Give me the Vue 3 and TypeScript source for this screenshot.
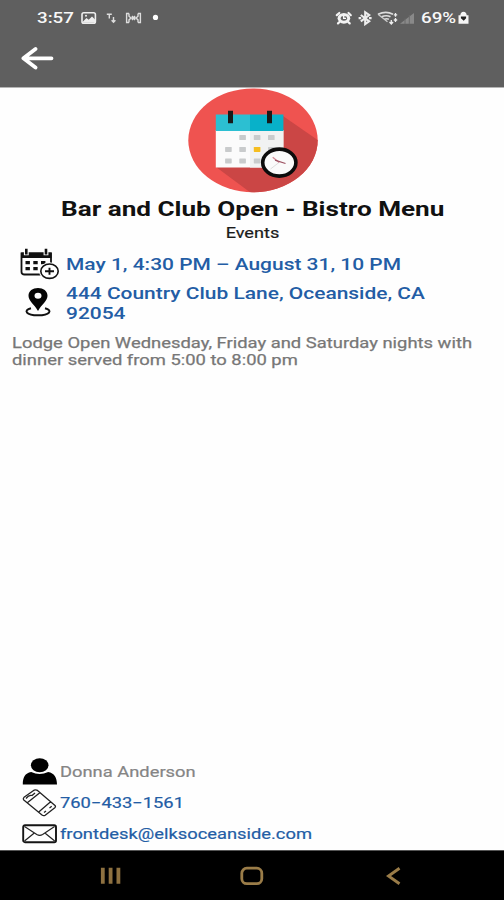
<script setup lang="ts">
interface Dot { x: number; y: number; fill: string }

const grey = '#c9cbcc'
const dots: Dot[] = [
  { x: 54.5, y: 49.5, fill: grey }, { x: 69, y: 49.5, fill: grey }, { x: 83.2, y: 49.5, fill: grey },
  { x: 40.3, y: 61.3, fill: grey }, { x: 54.5, y: 61.3, fill: grey }, { x: 69, y: 61.3, fill: '#f5bd1f' }, { x: 83.2, y: 61.3, fill: grey },
  { x: 40.3, y: 72.8, fill: grey }, { x: 54.5, y: 72.8, fill: grey }, { x: 69, y: 72.8, fill: grey },
]
const address: string[] = ['444 Country Club Lane, Oceanside, CA', '92054']
const description: string[] = [
  'Lodge Open Wednesday, Friday and Saturday nights with',
  'dinner served from 5:00 to 8:00 pm',
]
</script>

<template>
  <div class="screen">
    <header class="top">
      <div class="status">
        <span class="wide clock">3:57</span>
        <svg class="status-left" width="82" height="16" viewBox="0 0 82 16">
          <rect x="1" y="2.8" width="13.4" height="10.4" rx="1.8" fill="none" stroke="#eee" stroke-width="1.6" />
          <path d="M2 11.5L5.5 8l2.2 1.8L11 6.5l3 3v3.2H2z" fill="#eee" /><circle cx="5" cy="5.8" r="1" fill="#eee" />
          <path d="M25.8 4.2h5M28.3 4.2v4.3M32.5 7v5M30.6 10.3l1.9 2 1.9-2" fill="none" stroke="#ddd" stroke-width="1.4" />
          <path d="M48 3.5h-2.4v9H48M48 3.5v2.8l2 1.8-2 1.8v2.6M57 3.5h2.4v9H57M57 3.5v2.8l-2 1.8 2 1.8v2.6M50.5 8h4M51 6l3 4M54 6l-3 4" fill="none" stroke="#ddd" stroke-width="1.4" />
          <circle cx="74.5" cy="7.4" r="2.6" fill="#fff" />
        </svg>
        <svg class="status-right" width="80" height="16" viewBox="0 0 80 16">
          <path d="M1.8 5.2L4.3 3M13.5 3l2.3 2.2M4.5 12l-1.5 1.4M13.2 12l1.5 1.400" stroke="#f3f3f3" stroke-width="2.2" stroke-linecap="round" />
          <ellipse cx="8.900" cy="8.300" rx="6.300" ry="5.400" fill="#f3f3f3" /><ellipse cx="8.900" cy="8.300" rx="3.200" ry="2.400" fill="#666" />
          <path d="M8.700 6v2.400h2.300" fill="none" stroke="#fff" stroke-width="1.300" />
          <path d="M25.800 5l8.400 6.300-4 2.800V2.200l4 2.800-8.400 6.300" fill="none" stroke="#eee" stroke-width="2.100" />
          <path d="M23.600 8.200h2.600M34 8.200h2.600" stroke="#eee" stroke-width="2.200" />
          <path d="M43 4.200q8-3.600 15 0M46.500 6.800q5-2.200 9 0M49.500 9.200q2-1 4.400 0" fill="none" stroke="#ddd" stroke-width="1.600" />
          <path d="M43 4.200l9.500 7.600" stroke="#ccc" stroke-width="1.300" />
          <path d="M60.500 3v3.800M58.800 4.900h3.400M60.500 8v4M58.800 10h3.400M56.300 10v4M54.500 12l1.800 2 1.800-2" fill="none" stroke="#eee" stroke-width="1.300" />
          <path d="M65 13.800L79 3v10.800z" fill="#898989" />
          <path d="M70 8.500v5.500M74.300 5v9" stroke="#6b6b6b" stroke-width="1" />
        </svg>
        <span class="wide battery">69%</span>
        <svg class="lock" width="11" height="14" viewBox="0 0 11 14">
          <path d="M.5 4.200h1.800Q2.600.7 5.500.7t3.200 3.500h1.800v8.600H.5z" fill="#f5f5f5" />
          <path d="M2.900 5.500h5.200v1.800L5.700 9.800 2.900 7.300z" fill="#222" />
        </svg>
      </div>
      <button class="back" aria-label="Back">
        <svg width="34" height="24" viewBox="0 0 34 24">
          <path d="M31.500 12.300H3.500M15.500 3L3.400 12.300l12.100 9.200" fill="none" stroke="#fff" stroke-width="3.800" stroke-linecap="round" stroke-linejoin="round" />
        </svg>
      </button>
    </header>

    <main class="content">
      <svg class="hero" width="130" height="105" viewBox="0 0 130 105">
        <defs><clipPath id="disc"><ellipse cx="65" cy="52.3" rx="64.7" ry="51.9" /></clipPath></defs>
        <g clip-path="url(#disc)">
          <path d="M0 0h130v105H0z" fill="#ef5350" />
          <path d="M95 28l36 25v52H63L28 79z" fill="#cb4645" />
        </g>
        <path d="M27.8 42h67.6v37.5H27.8z" fill="#fbfbfb" />
        <path d="M62 42h33.4v37.5H62z" fill="#f1f2f2" />
        <path d="M27.8 26.500H62V43H27.800z" fill="#2cbfd2" />
        <path d="M62 26.500h33.400V43H62z" fill="#08b1c9" />
        <path d="M40 22.700h5v12.500h-5zM79 22.700h5v12.500h-5z" fill="#191919" />
        <rect v-for="(d, i) in dots" :key="i" :x="d.x - 3.2" :y="d.y - 2.4" width="6.6" height="5" rx=".6" :fill="d.fill" />
        <ellipse cx="91.300" cy="74.600" rx="16.600" ry="13.500" fill="#fafafa" stroke="#0c0c0c" stroke-width="3.600" />
        <path d="M82.500 81l8.500-6.500" stroke="#ddd" stroke-width="1" />
        <path d="M84.700 69.300l6.500 5.300" stroke="#d38a96" stroke-width="1.300" /><path d="M87 72.200l10.500 3.300" stroke="#9d5363" stroke-width="1.300" />
      </svg>

      <h1 class="title"><span class="wide">Bar and Club Open - Bistro Menu</span></h1>
      <p class="category"><span class="wide">Events</span></p>

      <section class="details">
        <a class="row date">
          <svg width="40" height="32" viewBox="0 0 40 32">
            <path d="M21 26.500H4.500Q1.500 26.500 1.500 24V5.500H31V16" fill="none" stroke="#111" stroke-width="1.800" />
            <path d="M1.300 4.500h30.200V10H1.300z" fill="#111" />
            <path d="M6.300 1.300v6M26 1.300v6" stroke="#fff" stroke-width="4.800" /><path d="M6.300.8v5.800M26 .8v5.800" stroke="#111" stroke-width="2.600" />
            <path d="M5.500 13h4.400v3.300H5.500zM13.300 13h4.400v3.300h-4.400zM21 13h4.400v3.300H21zM5.500 19h4.400v3.300H5.500zM13.300 19h4.400v3.300h-4.400z" fill="#111" />
            <ellipse cx="29.500" cy="23.200" rx="10.400" ry="9" fill="#fff" /><ellipse cx="29.500" cy="23.200" rx="8.700" ry="7.200" fill="#fff" stroke="#111" stroke-width="1.600" />
            <path d="M25 23.200h9M29.500 19.700v7" stroke="#111" stroke-width="1.900" />
          </svg>
          <span class="wide">May 1, 4:30 PM – August 31, 10 PM</span>
        </a>
        <a class="row place">
          <svg width="40" height="30" viewBox="0 0 40 30">
            <path d="M11 21.200C3 23.300 6 28.300 18 28.300s15-5 7-7.100" fill="none" stroke="#111" stroke-width="2" />
            <path fill-rule="evenodd" d="M18 24C14 17 8.500 14 8.500 8.800 8.500 4 12.700 1 18 1s9.500 3 9.500 7.800C27.500 14 22 17 18 24zM18 5.700a3.500 3 0 1 0 0 6 3.500 3 0 1 0 0-6z" fill="#050505" />
          </svg>
          <span class="address"><span v-for="line in address" :key="line" class="wide">{{ line }}</span></span>
        </a>
      </section>

      <p class="description"><span v-for="line in description" :key="line" class="wide">{{ line }}</span></p>

      <footer class="contacts">
        <div class="contact person">
          <svg width="36" height="28" viewBox="0 0 36 28">
            <ellipse cx="17.700" cy="7.300" rx="8.800" ry="7" fill="#000" />
            <path d="M.8 26.500c0-7 2.200-11.500 8.400-12.500q8.400 4.200 17 0C32.200 15 35 19.500 35 26.500z" fill="#000" />
          </svg>
          <span class="wide">Donna Anderson</span>
        </div>
        <a class="contact phone">
          <svg width="36" height="28" viewBox="0 0 36 28">
            <g fill="none" stroke="#222" stroke-width="1.300" stroke-linejoin="round">
              <path d="M2 8.300L12 1.200Q14 .4 15.500 1.400L33 16.500Q34 17.700 32.800 18.800L23.200 26.200Q21.500 27.200 20 26L1.800 11Q.8 9.700 2 8.300zM5.300 13.800L17.800 3.800M17 22.700L28.600 12.800M4 9.500q3-4 6-3l3-2.500" />
              <path d="M22 23.500l2-1.500M27.500 19l2.200-1.700" />
            </g>
          </svg>
          <span class="wide">760−433−1561</span>
        </a>
        <a class="contact mail">
          <svg width="36" height="20" viewBox="0 0 36 20">
            <rect x="1.200" y="1.200" width="32.800" height="17" rx="1.800" fill="none" stroke="#151515" stroke-width="1.900" />
            <path d="M2.500 2.500l12.300 8q2.900 1.600 5.800 0l12-8M2.500 17l9.800-8M32.700 17l-9.800-8" fill="none" stroke="#222" stroke-width="1.200" />
          </svg>
          <span class="wide">frontdesk@elksoceanside.com</span>
        </a>
      </footer>
    </main>

    <nav class="navbar">
      <svg width="24" height="20" viewBox="0 0 24 20"><path d="M3.800 1.800v16M11.600 1.800v16M19.400 1.800v16" stroke="#8e7140" stroke-width="3.800" /></svg>
      <svg width="24" height="20" viewBox="0 0 24 20"><rect x="1.800" y="2.200" width="20" height="15.500" rx="5" fill="none" stroke="#9a7c48" stroke-width="2.800" /></svg>
      <svg width="24" height="20" viewBox="0 0 24 20"><path d="M18.500 2.200L7.500 10l11 7.800" fill="none" stroke="#9a7c48" stroke-width="2.900" /></svg>
    </nav>
  </div>
</template>

<style>
body { margin: 0; }
</style>

<style scoped>
.screen { width: 504px; height: 900px; display: flex; flex-direction: column; background: #fefefe; font-family: Roboto, "Liberation Sans", sans-serif; overflow: hidden; }
.wide { display: block; width: max-content; white-space: nowrap; transform: scaleX(1.25); transform-origin: left center; }
.top { height: 88px; flex: none; background: #5f5f5f; border-bottom: 1px solid #b5b5b5; box-sizing: border-box; }
.status { height: 35px; display: flex; align-items: center; box-sizing: border-box; padding: 0 0 0 37px; color: #f8f8f8; font-size: 15px; font-weight: 500; }
.clock { width: 44px; }
.status-left { margin-right: 172px; }
.status-right { margin-right: 6px; }
.battery { width: 37px; }
.back { display: block; margin: 11px 0 0 20px; padding: 0; border: 0; background: none; line-height: 0; }
.content { flex: 1; display: flex; flex-direction: column; min-height: 0; }
.hero { align-self: center; margin: 0 0 0 2px; flex: none; }
.title, .category { margin: 0; display: flex; justify-content: center; }
.title .wide, .category .wide { transform-origin: center; }
.title { font-size: 21px; line-height: 26px; font-weight: 700; color: #111; margin-top: 3px; }
.title .wide { transform: translateX(0.5px) scaleX(1.243); }
.category { font-size: 14.5px; line-height: 18px; color: #1b1b1b; margin-top: 2px; }
.category .wide { transform: translateY(0.5px) scaleX(1.25); -webkit-text-stroke: 0.2px currentColor; }
.details { padding: 6px 0 0 20px; color: #235da5; font-size: 17px; font-weight: 500; }
.details .wide { transform: scaleX(1.232); }
.row { display: flex; gap: 6px; }
.row svg { flex: none; }
.date { height: 32px; align-items: center; }
.place { margin-top: 7px; align-items: flex-start; }
.address { line-height: 19.5px; margin-top: -3px; }
.description { margin: 12px 0 0 12px; font-size: 15px; line-height: 17px; color: #777; -webkit-text-stroke: 0.25px currentColor; }
.description .wide { transform: scaleX(1.226); }
.contacts { margin: auto 0 0 22px; display: flex; flex-direction: column; font-size: 15px; }
.contact { display: flex; align-items: center; gap: 1.5px; height: 31.3px; color: #235da5; -webkit-text-stroke: 0.2px currentColor; }
.contact .wide { transform: scaleX(1.222); }
.person { color: #858585; }
.navbar { height: 50px; flex: none; box-sizing: border-box; background: #000; border-top: 1px solid #555; display: flex; align-items: center; justify-content: space-between; padding: 0 99px; }
</style>
